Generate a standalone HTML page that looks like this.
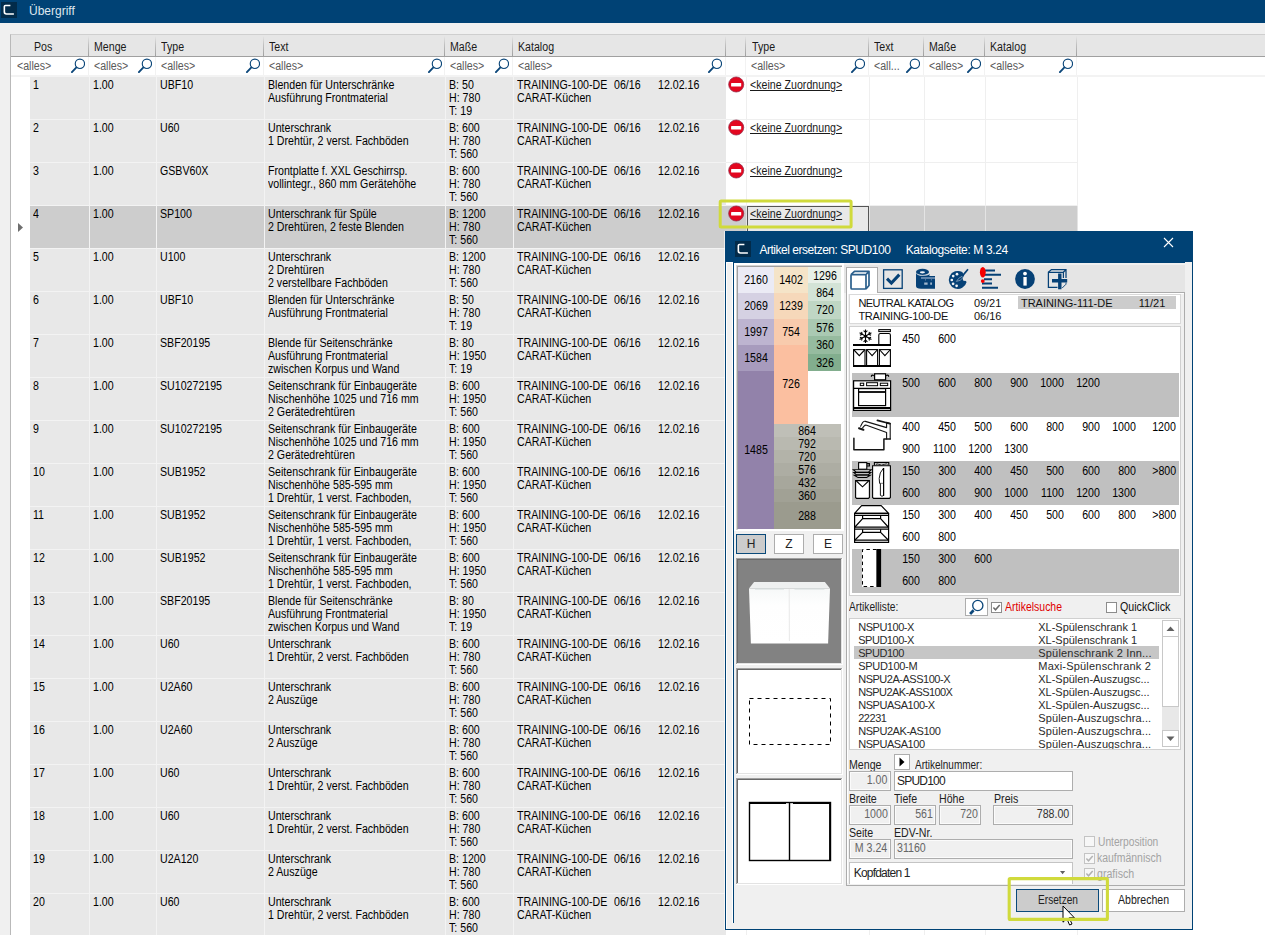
<!DOCTYPE html><html><head><meta charset="utf-8"><title>Übergriff</title><style>
*{box-sizing:border-box;margin:0;padding:0}
html,body{width:1265px;height:935px;overflow:hidden}
body{background:#f0f0f0;font-family:"Liberation Sans",sans-serif;font-size:12.5px;color:#000;position:relative;letter-spacing:0}
.a{position:absolute}
.t{position:absolute;white-space:pre;line-height:13px;transform:scaleX(.85);transform-origin:0 0}
.hd{position:absolute;top:35px;height:21px;background:#e6e6e6}
.hs{position:absolute;top:36px;width:1px;height:21px;background:linear-gradient(to bottom,rgba(160,160,160,0) 0%,rgba(160,160,160,.55) 45%,#a0a0a0 100%)}
.ht{position:absolute;top:41px;white-space:pre;line-height:13px;color:#1a1a1a;transform:scaleX(.85);transform-origin:0 0}
.ft{position:absolute;top:60px;white-space:pre;line-height:13px;color:#5a5a5a;transform:scaleX(.85);transform-origin:0 0}
.row{position:absolute;left:30px;width:696px;height:42px;background:#e8e8e8}
.row.sel{background:#cdcdcd}
.vs{position:absolute;width:1px;background:#f3f3f3}
.seg{font-family:"Liberation Sans",sans-serif;font-size:12px;letter-spacing:0}
.num{position:absolute;white-space:pre;line-height:13px;text-align:right}
.lb{position:absolute;white-space:pre;line-height:13px}
.fld{position:absolute;height:19px;border:1px solid #adadad;background:#f0f0f0;box-shadow:inset 0 0 0 1px #f8f8f8}
.fld span{position:absolute;top:3px;line-height:13px;white-space:pre;font-size:12px;letter-spacing:-0.3px;color:#555}
</style></head><body>
<div class="a" style="left:0;top:0;width:1265px;height:23px;background:#004275"></div>
<div class="a" style="left:1px;top:2px;width:16px;height:16px;background:#022b4a"></div>
<svg class="a" style="left:1px;top:2px" width="16" height="16" viewBox="0 0 16 16"><path d="M9.4 3.45 H4.4 Q3.35 3.45 3.35 4.5 V10.1 Q3.35 11.95 5.5 11.95 H12.9" fill="none" stroke="#fff" stroke-width="1.6"/></svg>
<div class="lb seg" style="left:29px;top:4px;color:#dfe7ee;line-height:14px">Übergriff</div>
<div class="a" style="left:10px;top:34px;width:1255px;height:901px;background:#fff;border-left:1px solid #b9b9b9;border-top:1px solid #cfcfcf"></div>
<div class="a" style="left:30px;top:76px;width:696px;height:859px;background:#f3f3f3"></div>
<div class="hd" style="left:11px;width:1254px"></div>
<div class="a" style="left:11px;top:56px;width:1254px;height:1px;background:#a0a0a0"></div>
<div class="hs" style="left:88px;top:36px;height:20px"></div>
<div class="hs" style="left:155px;top:36px;height:20px"></div>
<div class="hs" style="left:263px;top:36px;height:20px"></div>
<div class="hs" style="left:444px;top:36px;height:20px"></div>
<div class="hs" style="left:512px;top:36px;height:20px"></div>
<div class="hs" style="left:725px;top:36px;height:20px"></div>
<div class="hs" style="left:745px;top:36px;height:20px"></div>
<div class="hs" style="left:868px;top:36px;height:20px"></div>
<div class="hs" style="left:923px;top:36px;height:20px"></div>
<div class="hs" style="left:984px;top:36px;height:20px"></div>
<div class="hs" style="left:1076px;top:36px;height:20px"></div>
<div class="ht" style="left:34px">Pos</div>
<div class="ht" style="left:94px">Menge</div>
<div class="ht" style="left:161px">Type</div>
<div class="ht" style="left:269px">Text</div>
<div class="ht" style="left:450px">Maße</div>
<div class="ht" style="left:518px">Katalog</div>
<div class="ht" style="left:752px">Type</div>
<div class="ht" style="left:874px">Text</div>
<div class="ht" style="left:929px">Maße</div>
<div class="ht" style="left:990px">Katalog</div>
<div class="a" style="left:11px;top:75px;width:1254px;height:2px;background:#f3f3f3"></div>
<div class="a" style="left:88px;top:57px;width:1px;height:18px;background:#f2f2f2"></div>
<div class="a" style="left:155px;top:57px;width:1px;height:18px;background:#f2f2f2"></div>
<div class="a" style="left:263px;top:57px;width:1px;height:18px;background:#f2f2f2"></div>
<div class="a" style="left:444px;top:57px;width:1px;height:18px;background:#f2f2f2"></div>
<div class="a" style="left:512px;top:57px;width:1px;height:18px;background:#f2f2f2"></div>
<div class="a" style="left:725px;top:57px;width:1px;height:18px;background:#f2f2f2"></div>
<div class="a" style="left:745px;top:57px;width:1px;height:18px;background:#f2f2f2"></div>
<div class="a" style="left:868px;top:57px;width:1px;height:18px;background:#f2f2f2"></div>
<div class="a" style="left:923px;top:57px;width:1px;height:18px;background:#f2f2f2"></div>
<div class="a" style="left:984px;top:57px;width:1px;height:18px;background:#f2f2f2"></div>
<div class="a" style="left:1076px;top:57px;width:1px;height:18px;background:#f2f2f2"></div>
<div class="ft" style="left:17px">&lt;alles&gt;</div>
<svg class="a" style="left:70px;top:58px" width="15" height="15" viewBox="0 0 15 15"><circle cx="9.9" cy="5.8" r="4.65" fill="none" stroke="#0c477a" stroke-width="1.15"/><path d="M6.4 9.4 L1.9 14.1" stroke="#0c477a" stroke-width="1.85" stroke-linecap="round"/></svg>
<div class="ft" style="left:94px">&lt;alles&gt;</div>
<svg class="a" style="left:137px;top:58px" width="15" height="15" viewBox="0 0 15 15"><circle cx="9.9" cy="5.8" r="4.65" fill="none" stroke="#0c477a" stroke-width="1.15"/><path d="M6.4 9.4 L1.9 14.1" stroke="#0c477a" stroke-width="1.85" stroke-linecap="round"/></svg>
<div class="ft" style="left:161px">&lt;alles&gt;</div>
<svg class="a" style="left:245px;top:58px" width="15" height="15" viewBox="0 0 15 15"><circle cx="9.9" cy="5.8" r="4.65" fill="none" stroke="#0c477a" stroke-width="1.15"/><path d="M6.4 9.4 L1.9 14.1" stroke="#0c477a" stroke-width="1.85" stroke-linecap="round"/></svg>
<div class="ft" style="left:269px">&lt;alles&gt;</div>
<svg class="a" style="left:427px;top:58px" width="15" height="15" viewBox="0 0 15 15"><circle cx="9.9" cy="5.8" r="4.65" fill="none" stroke="#0c477a" stroke-width="1.15"/><path d="M6.4 9.4 L1.9 14.1" stroke="#0c477a" stroke-width="1.85" stroke-linecap="round"/></svg>
<div class="ft" style="left:450px">&lt;alles&gt;</div>
<svg class="a" style="left:494px;top:58px" width="15" height="15" viewBox="0 0 15 15"><circle cx="9.9" cy="5.8" r="4.65" fill="none" stroke="#0c477a" stroke-width="1.15"/><path d="M6.4 9.4 L1.9 14.1" stroke="#0c477a" stroke-width="1.85" stroke-linecap="round"/></svg>
<div class="ft" style="left:518px">&lt;alles&gt;</div>
<svg class="a" style="left:707px;top:58px" width="15" height="15" viewBox="0 0 15 15"><circle cx="9.9" cy="5.8" r="4.65" fill="none" stroke="#0c477a" stroke-width="1.15"/><path d="M6.4 9.4 L1.9 14.1" stroke="#0c477a" stroke-width="1.85" stroke-linecap="round"/></svg>
<div class="ft" style="left:751px">&lt;alles&gt;</div>
<svg class="a" style="left:850px;top:58px" width="15" height="15" viewBox="0 0 15 15"><circle cx="9.9" cy="5.8" r="4.65" fill="none" stroke="#0c477a" stroke-width="1.15"/><path d="M6.4 9.4 L1.9 14.1" stroke="#0c477a" stroke-width="1.85" stroke-linecap="round"/></svg>
<div class="ft" style="left:874px">&lt;all...</div>
<svg class="a" style="left:905px;top:58px" width="15" height="15" viewBox="0 0 15 15"><circle cx="9.9" cy="5.8" r="4.65" fill="none" stroke="#0c477a" stroke-width="1.15"/><path d="M6.4 9.4 L1.9 14.1" stroke="#0c477a" stroke-width="1.85" stroke-linecap="round"/></svg>
<div class="ft" style="left:929px">&lt;alles&gt;</div>
<svg class="a" style="left:966px;top:58px" width="15" height="15" viewBox="0 0 15 15"><circle cx="9.9" cy="5.8" r="4.65" fill="none" stroke="#0c477a" stroke-width="1.15"/><path d="M6.4 9.4 L1.9 14.1" stroke="#0c477a" stroke-width="1.85" stroke-linecap="round"/></svg>
<div class="ft" style="left:990px">&lt;alles&gt;</div>
<svg class="a" style="left:1058px;top:58px" width="15" height="15" viewBox="0 0 15 15"><circle cx="9.9" cy="5.8" r="4.65" fill="none" stroke="#0c477a" stroke-width="1.15"/><path d="M6.4 9.4 L1.9 14.1" stroke="#0c477a" stroke-width="1.85" stroke-linecap="round"/></svg>
<div class="row" style="top:77px"></div>
<div class="vs" style="left:89px;top:77px;height:42px"></div>
<div class="vs" style="left:156px;top:77px;height:42px"></div>
<div class="vs" style="left:264px;top:77px;height:42px"></div>
<div class="vs" style="left:445px;top:77px;height:42px"></div>
<div class="vs" style="left:513px;top:77px;height:42px"></div>
<div class="vs" style="left:746px;top:77px;height:43px;background:#efefef"></div>
<div class="vs" style="left:869px;top:77px;height:43px;background:#efefef"></div>
<div class="vs" style="left:924px;top:77px;height:43px;background:#efefef"></div>
<div class="vs" style="left:985px;top:77px;height:43px;background:#efefef"></div>
<div class="vs" style="left:1077px;top:77px;height:43px;background:#efefef"></div>
<div class="a" style="left:726px;top:119px;width:352px;height:1px;background:#efefef"></div>
<div class="t" style="left:33px;top:79px">1</div>
<div class="t" style="left:93px;top:79px">1.00</div>
<div class="t" style="left:160px;top:79px">UBF10</div>
<div class="t" style="left:268px;top:79px">Blenden für Unterschränke<br>Ausführung Frontmaterial</div>
<div class="t" style="left:449px;top:79px">B: 50<br>H: 780<br>T: 19</div>
<div class="t" style="left:517px;top:79px">TRAINING-100-DE<br>CARAT-Küchen</div>
<div class="t" style="left:614px;top:79px">06/16</div>
<div class="t" style="left:658px;top:79px">12.02.16</div>
<svg class="a" style="left:728px;top:76px" width="17" height="17" viewBox="0 0 17 17"><circle cx="8.2" cy="8.5" r="7.55" fill="#e3061f" stroke="#8c2846" stroke-width="0.7"/><rect x="3.1" y="6.9" width="10.1" height="3.5" rx="0.5" fill="#fff"/></svg>
<div class="t" style="left:750px;top:79px;text-decoration:underline;color:#1a1a1a">&lt;keine Zuordnung&gt;</div>
<div class="row" style="top:120px"></div>
<div class="vs" style="left:89px;top:120px;height:42px"></div>
<div class="vs" style="left:156px;top:120px;height:42px"></div>
<div class="vs" style="left:264px;top:120px;height:42px"></div>
<div class="vs" style="left:445px;top:120px;height:42px"></div>
<div class="vs" style="left:513px;top:120px;height:42px"></div>
<div class="vs" style="left:746px;top:120px;height:43px;background:#efefef"></div>
<div class="vs" style="left:869px;top:120px;height:43px;background:#efefef"></div>
<div class="vs" style="left:924px;top:120px;height:43px;background:#efefef"></div>
<div class="vs" style="left:985px;top:120px;height:43px;background:#efefef"></div>
<div class="vs" style="left:1077px;top:120px;height:43px;background:#efefef"></div>
<div class="a" style="left:726px;top:162px;width:352px;height:1px;background:#efefef"></div>
<div class="t" style="left:33px;top:122px">2</div>
<div class="t" style="left:93px;top:122px">1.00</div>
<div class="t" style="left:160px;top:122px">U60</div>
<div class="t" style="left:268px;top:122px">Unterschrank<br>1 Drehtür, 2 verst. Fachböden</div>
<div class="t" style="left:449px;top:122px">B: 600<br>H: 780<br>T: 560</div>
<div class="t" style="left:517px;top:122px">TRAINING-100-DE<br>CARAT-Küchen</div>
<div class="t" style="left:614px;top:122px">06/16</div>
<div class="t" style="left:658px;top:122px">12.02.16</div>
<svg class="a" style="left:728px;top:119px" width="17" height="17" viewBox="0 0 17 17"><circle cx="8.2" cy="8.5" r="7.55" fill="#e3061f" stroke="#8c2846" stroke-width="0.7"/><rect x="3.1" y="6.9" width="10.1" height="3.5" rx="0.5" fill="#fff"/></svg>
<div class="t" style="left:750px;top:122px;text-decoration:underline;color:#1a1a1a">&lt;keine Zuordnung&gt;</div>
<div class="row" style="top:163px"></div>
<div class="vs" style="left:89px;top:163px;height:42px"></div>
<div class="vs" style="left:156px;top:163px;height:42px"></div>
<div class="vs" style="left:264px;top:163px;height:42px"></div>
<div class="vs" style="left:445px;top:163px;height:42px"></div>
<div class="vs" style="left:513px;top:163px;height:42px"></div>
<div class="vs" style="left:746px;top:163px;height:43px;background:#efefef"></div>
<div class="vs" style="left:869px;top:163px;height:43px;background:#efefef"></div>
<div class="vs" style="left:924px;top:163px;height:43px;background:#efefef"></div>
<div class="vs" style="left:985px;top:163px;height:43px;background:#efefef"></div>
<div class="vs" style="left:1077px;top:163px;height:43px;background:#efefef"></div>
<div class="a" style="left:726px;top:205px;width:352px;height:1px;background:#efefef"></div>
<div class="t" style="left:33px;top:165px">3</div>
<div class="t" style="left:93px;top:165px">1.00</div>
<div class="t" style="left:160px;top:165px">GSBV60X</div>
<div class="t" style="left:268px;top:165px">Frontplatte f. XXL Geschirrsp.<br>vollintegr., 860 mm Gerätehöhe</div>
<div class="t" style="left:449px;top:165px">B: 600<br>H: 780<br>T: 560</div>
<div class="t" style="left:517px;top:165px">TRAINING-100-DE<br>CARAT-Küchen</div>
<div class="t" style="left:614px;top:165px">06/16</div>
<div class="t" style="left:658px;top:165px">12.02.16</div>
<svg class="a" style="left:728px;top:162px" width="17" height="17" viewBox="0 0 17 17"><circle cx="8.2" cy="8.5" r="7.55" fill="#e3061f" stroke="#8c2846" stroke-width="0.7"/><rect x="3.1" y="6.9" width="10.1" height="3.5" rx="0.5" fill="#fff"/></svg>
<div class="t" style="left:750px;top:165px;text-decoration:underline;color:#1a1a1a">&lt;keine Zuordnung&gt;</div>
<div class="row sel" style="top:206px"></div>
<div class="a" style="left:726px;top:206px;width:352px;height:42px;background:#cdcdcd"></div>
<div class="vs" style="left:89px;top:206px;height:42px"></div>
<div class="vs" style="left:156px;top:206px;height:42px"></div>
<div class="vs" style="left:264px;top:206px;height:42px"></div>
<div class="vs" style="left:445px;top:206px;height:42px"></div>
<div class="vs" style="left:513px;top:206px;height:42px"></div>
<div class="vs" style="left:746px;top:206px;height:43px;background:#e4e4e4"></div>
<div class="vs" style="left:869px;top:206px;height:43px;background:#e4e4e4"></div>
<div class="vs" style="left:924px;top:206px;height:43px;background:#e4e4e4"></div>
<div class="vs" style="left:985px;top:206px;height:43px;background:#e4e4e4"></div>
<div class="vs" style="left:1077px;top:206px;height:43px;background:#e4e4e4"></div>
<div class="a" style="left:726px;top:248px;width:352px;height:1px;background:#efefef"></div>
<div class="t" style="left:33px;top:208px">4</div>
<div class="t" style="left:93px;top:208px">1.00</div>
<div class="t" style="left:160px;top:208px">SP100</div>
<div class="t" style="left:268px;top:208px">Unterschrank für Spüle<br>2 Drehtüren, 2 feste Blenden</div>
<div class="t" style="left:449px;top:208px">B: 1200<br>H: 780<br>T: 560</div>
<div class="t" style="left:517px;top:208px">TRAINING-100-DE<br>CARAT-Küchen</div>
<div class="t" style="left:614px;top:208px">06/16</div>
<div class="t" style="left:658px;top:208px">12.02.16</div>
<div class="a" style="left:747px;top:206px;width:122px;height:42px;background:#e8e8e8;border:1px solid #555"></div>
<svg class="a" style="left:728px;top:205px" width="17" height="17" viewBox="0 0 17 17"><circle cx="8.2" cy="8.5" r="7.55" fill="#e3061f" stroke="#8c2846" stroke-width="0.7"/><rect x="3.1" y="6.9" width="10.1" height="3.5" rx="0.5" fill="#fff"/></svg>
<div class="t" style="left:750px;top:208px;text-decoration:underline;color:#1a1a1a">&lt;keine Zuordnung&gt;</div>
<div class="row" style="top:249px"></div>
<div class="vs" style="left:89px;top:249px;height:42px"></div>
<div class="vs" style="left:156px;top:249px;height:42px"></div>
<div class="vs" style="left:264px;top:249px;height:42px"></div>
<div class="vs" style="left:445px;top:249px;height:42px"></div>
<div class="vs" style="left:513px;top:249px;height:42px"></div>
<div class="vs" style="left:746px;top:249px;height:43px;background:#efefef"></div>
<div class="vs" style="left:869px;top:249px;height:43px;background:#efefef"></div>
<div class="vs" style="left:924px;top:249px;height:43px;background:#efefef"></div>
<div class="vs" style="left:985px;top:249px;height:43px;background:#efefef"></div>
<div class="vs" style="left:1077px;top:249px;height:43px;background:#efefef"></div>
<div class="a" style="left:726px;top:291px;width:352px;height:1px;background:#efefef"></div>
<div class="t" style="left:33px;top:251px">5</div>
<div class="t" style="left:93px;top:251px">1.00</div>
<div class="t" style="left:160px;top:251px">U100</div>
<div class="t" style="left:268px;top:251px">Unterschrank<br>2 Drehtüren<br>2 verstellbare Fachböden</div>
<div class="t" style="left:449px;top:251px">B: 1200<br>H: 780<br>T: 560</div>
<div class="t" style="left:517px;top:251px">TRAINING-100-DE<br>CARAT-Küchen</div>
<div class="t" style="left:614px;top:251px">06/16</div>
<div class="t" style="left:658px;top:251px">12.02.16</div>
<div class="row" style="top:292px"></div>
<div class="vs" style="left:89px;top:292px;height:42px"></div>
<div class="vs" style="left:156px;top:292px;height:42px"></div>
<div class="vs" style="left:264px;top:292px;height:42px"></div>
<div class="vs" style="left:445px;top:292px;height:42px"></div>
<div class="vs" style="left:513px;top:292px;height:42px"></div>
<div class="vs" style="left:746px;top:292px;height:43px;background:#efefef"></div>
<div class="vs" style="left:869px;top:292px;height:43px;background:#efefef"></div>
<div class="vs" style="left:924px;top:292px;height:43px;background:#efefef"></div>
<div class="vs" style="left:985px;top:292px;height:43px;background:#efefef"></div>
<div class="vs" style="left:1077px;top:292px;height:43px;background:#efefef"></div>
<div class="a" style="left:726px;top:334px;width:352px;height:1px;background:#efefef"></div>
<div class="t" style="left:33px;top:294px">6</div>
<div class="t" style="left:93px;top:294px">1.00</div>
<div class="t" style="left:160px;top:294px">UBF10</div>
<div class="t" style="left:268px;top:294px">Blenden für Unterschränke<br>Ausführung Frontmaterial</div>
<div class="t" style="left:449px;top:294px">B: 50<br>H: 780<br>T: 19</div>
<div class="t" style="left:517px;top:294px">TRAINING-100-DE<br>CARAT-Küchen</div>
<div class="t" style="left:614px;top:294px">06/16</div>
<div class="t" style="left:658px;top:294px">12.02.16</div>
<div class="row" style="top:335px"></div>
<div class="vs" style="left:89px;top:335px;height:42px"></div>
<div class="vs" style="left:156px;top:335px;height:42px"></div>
<div class="vs" style="left:264px;top:335px;height:42px"></div>
<div class="vs" style="left:445px;top:335px;height:42px"></div>
<div class="vs" style="left:513px;top:335px;height:42px"></div>
<div class="vs" style="left:746px;top:335px;height:43px;background:#efefef"></div>
<div class="vs" style="left:869px;top:335px;height:43px;background:#efefef"></div>
<div class="vs" style="left:924px;top:335px;height:43px;background:#efefef"></div>
<div class="vs" style="left:985px;top:335px;height:43px;background:#efefef"></div>
<div class="vs" style="left:1077px;top:335px;height:43px;background:#efefef"></div>
<div class="a" style="left:726px;top:377px;width:352px;height:1px;background:#efefef"></div>
<div class="t" style="left:33px;top:337px">7</div>
<div class="t" style="left:93px;top:337px">1.00</div>
<div class="t" style="left:160px;top:337px">SBF20195</div>
<div class="t" style="left:268px;top:337px">Blende für Seitenschränke<br>Ausführung Frontmaterial<br>zwischen Korpus und Wand</div>
<div class="t" style="left:449px;top:337px">B: 80<br>H: 1950<br>T: 19</div>
<div class="t" style="left:517px;top:337px">TRAINING-100-DE<br>CARAT-Küchen</div>
<div class="t" style="left:614px;top:337px">06/16</div>
<div class="t" style="left:658px;top:337px">12.02.16</div>
<div class="row" style="top:378px"></div>
<div class="vs" style="left:89px;top:378px;height:42px"></div>
<div class="vs" style="left:156px;top:378px;height:42px"></div>
<div class="vs" style="left:264px;top:378px;height:42px"></div>
<div class="vs" style="left:445px;top:378px;height:42px"></div>
<div class="vs" style="left:513px;top:378px;height:42px"></div>
<div class="vs" style="left:746px;top:378px;height:43px;background:#efefef"></div>
<div class="vs" style="left:869px;top:378px;height:43px;background:#efefef"></div>
<div class="vs" style="left:924px;top:378px;height:43px;background:#efefef"></div>
<div class="vs" style="left:985px;top:378px;height:43px;background:#efefef"></div>
<div class="vs" style="left:1077px;top:378px;height:43px;background:#efefef"></div>
<div class="a" style="left:726px;top:420px;width:352px;height:1px;background:#efefef"></div>
<div class="t" style="left:33px;top:380px">8</div>
<div class="t" style="left:93px;top:380px">1.00</div>
<div class="t" style="left:160px;top:380px">SU10272195</div>
<div class="t" style="left:268px;top:380px">Seitenschrank für Einbaugeräte<br>Nischenhöhe 1025 und 716 mm<br>2 Gerätedrehtüren</div>
<div class="t" style="left:449px;top:380px">B: 600<br>H: 1950<br>T: 560</div>
<div class="t" style="left:517px;top:380px">TRAINING-100-DE<br>CARAT-Küchen</div>
<div class="t" style="left:614px;top:380px">06/16</div>
<div class="t" style="left:658px;top:380px">12.02.16</div>
<div class="row" style="top:421px"></div>
<div class="vs" style="left:89px;top:421px;height:42px"></div>
<div class="vs" style="left:156px;top:421px;height:42px"></div>
<div class="vs" style="left:264px;top:421px;height:42px"></div>
<div class="vs" style="left:445px;top:421px;height:42px"></div>
<div class="vs" style="left:513px;top:421px;height:42px"></div>
<div class="vs" style="left:746px;top:421px;height:43px;background:#efefef"></div>
<div class="vs" style="left:869px;top:421px;height:43px;background:#efefef"></div>
<div class="vs" style="left:924px;top:421px;height:43px;background:#efefef"></div>
<div class="vs" style="left:985px;top:421px;height:43px;background:#efefef"></div>
<div class="vs" style="left:1077px;top:421px;height:43px;background:#efefef"></div>
<div class="a" style="left:726px;top:463px;width:352px;height:1px;background:#efefef"></div>
<div class="t" style="left:33px;top:423px">9</div>
<div class="t" style="left:93px;top:423px">1.00</div>
<div class="t" style="left:160px;top:423px">SU10272195</div>
<div class="t" style="left:268px;top:423px">Seitenschrank für Einbaugeräte<br>Nischenhöhe 1025 und 716 mm<br>2 Gerätedrehtüren</div>
<div class="t" style="left:449px;top:423px">B: 600<br>H: 1950<br>T: 560</div>
<div class="t" style="left:517px;top:423px">TRAINING-100-DE<br>CARAT-Küchen</div>
<div class="t" style="left:614px;top:423px">06/16</div>
<div class="t" style="left:658px;top:423px">12.02.16</div>
<div class="row" style="top:464px"></div>
<div class="vs" style="left:89px;top:464px;height:42px"></div>
<div class="vs" style="left:156px;top:464px;height:42px"></div>
<div class="vs" style="left:264px;top:464px;height:42px"></div>
<div class="vs" style="left:445px;top:464px;height:42px"></div>
<div class="vs" style="left:513px;top:464px;height:42px"></div>
<div class="vs" style="left:746px;top:464px;height:43px;background:#efefef"></div>
<div class="vs" style="left:869px;top:464px;height:43px;background:#efefef"></div>
<div class="vs" style="left:924px;top:464px;height:43px;background:#efefef"></div>
<div class="vs" style="left:985px;top:464px;height:43px;background:#efefef"></div>
<div class="vs" style="left:1077px;top:464px;height:43px;background:#efefef"></div>
<div class="a" style="left:726px;top:506px;width:352px;height:1px;background:#efefef"></div>
<div class="t" style="left:33px;top:466px">10</div>
<div class="t" style="left:93px;top:466px">1.00</div>
<div class="t" style="left:160px;top:466px">SUB1952</div>
<div class="t" style="left:268px;top:466px">Seitenschrank für Einbaugeräte<br>Nischenhöhe 585-595 mm<br>1 Drehtür, 1 verst. Fachboden,</div>
<div class="t" style="left:449px;top:466px">B: 600<br>H: 1950<br>T: 560</div>
<div class="t" style="left:517px;top:466px">TRAINING-100-DE<br>CARAT-Küchen</div>
<div class="t" style="left:614px;top:466px">06/16</div>
<div class="t" style="left:658px;top:466px">12.02.16</div>
<div class="row" style="top:507px"></div>
<div class="vs" style="left:89px;top:507px;height:42px"></div>
<div class="vs" style="left:156px;top:507px;height:42px"></div>
<div class="vs" style="left:264px;top:507px;height:42px"></div>
<div class="vs" style="left:445px;top:507px;height:42px"></div>
<div class="vs" style="left:513px;top:507px;height:42px"></div>
<div class="vs" style="left:746px;top:507px;height:43px;background:#efefef"></div>
<div class="vs" style="left:869px;top:507px;height:43px;background:#efefef"></div>
<div class="vs" style="left:924px;top:507px;height:43px;background:#efefef"></div>
<div class="vs" style="left:985px;top:507px;height:43px;background:#efefef"></div>
<div class="vs" style="left:1077px;top:507px;height:43px;background:#efefef"></div>
<div class="a" style="left:726px;top:549px;width:352px;height:1px;background:#efefef"></div>
<div class="t" style="left:33px;top:509px">11</div>
<div class="t" style="left:93px;top:509px">1.00</div>
<div class="t" style="left:160px;top:509px">SUB1952</div>
<div class="t" style="left:268px;top:509px">Seitenschrank für Einbaugeräte<br>Nischenhöhe 585-595 mm<br>1 Drehtür, 1 verst. Fachboden,</div>
<div class="t" style="left:449px;top:509px">B: 600<br>H: 1950<br>T: 560</div>
<div class="t" style="left:517px;top:509px">TRAINING-100-DE<br>CARAT-Küchen</div>
<div class="t" style="left:614px;top:509px">06/16</div>
<div class="t" style="left:658px;top:509px">12.02.16</div>
<div class="row" style="top:550px"></div>
<div class="vs" style="left:89px;top:550px;height:42px"></div>
<div class="vs" style="left:156px;top:550px;height:42px"></div>
<div class="vs" style="left:264px;top:550px;height:42px"></div>
<div class="vs" style="left:445px;top:550px;height:42px"></div>
<div class="vs" style="left:513px;top:550px;height:42px"></div>
<div class="vs" style="left:746px;top:550px;height:43px;background:#efefef"></div>
<div class="vs" style="left:869px;top:550px;height:43px;background:#efefef"></div>
<div class="vs" style="left:924px;top:550px;height:43px;background:#efefef"></div>
<div class="vs" style="left:985px;top:550px;height:43px;background:#efefef"></div>
<div class="vs" style="left:1077px;top:550px;height:43px;background:#efefef"></div>
<div class="a" style="left:726px;top:592px;width:352px;height:1px;background:#efefef"></div>
<div class="t" style="left:33px;top:552px">12</div>
<div class="t" style="left:93px;top:552px">1.00</div>
<div class="t" style="left:160px;top:552px">SUB1952</div>
<div class="t" style="left:268px;top:552px">Seitenschrank für Einbaugeräte<br>Nischenhöhe 585-595 mm<br>1 Drehtür, 1 verst. Fachboden,</div>
<div class="t" style="left:449px;top:552px">B: 600<br>H: 1950<br>T: 560</div>
<div class="t" style="left:517px;top:552px">TRAINING-100-DE<br>CARAT-Küchen</div>
<div class="t" style="left:614px;top:552px">06/16</div>
<div class="t" style="left:658px;top:552px">12.02.16</div>
<div class="row" style="top:593px"></div>
<div class="vs" style="left:89px;top:593px;height:42px"></div>
<div class="vs" style="left:156px;top:593px;height:42px"></div>
<div class="vs" style="left:264px;top:593px;height:42px"></div>
<div class="vs" style="left:445px;top:593px;height:42px"></div>
<div class="vs" style="left:513px;top:593px;height:42px"></div>
<div class="vs" style="left:746px;top:593px;height:43px;background:#efefef"></div>
<div class="vs" style="left:869px;top:593px;height:43px;background:#efefef"></div>
<div class="vs" style="left:924px;top:593px;height:43px;background:#efefef"></div>
<div class="vs" style="left:985px;top:593px;height:43px;background:#efefef"></div>
<div class="vs" style="left:1077px;top:593px;height:43px;background:#efefef"></div>
<div class="a" style="left:726px;top:635px;width:352px;height:1px;background:#efefef"></div>
<div class="t" style="left:33px;top:595px">13</div>
<div class="t" style="left:93px;top:595px">1.00</div>
<div class="t" style="left:160px;top:595px">SBF20195</div>
<div class="t" style="left:268px;top:595px">Blende für Seitenschränke<br>Ausführung Frontmaterial<br>zwischen Korpus und Wand</div>
<div class="t" style="left:449px;top:595px">B: 80<br>H: 1950<br>T: 19</div>
<div class="t" style="left:517px;top:595px">TRAINING-100-DE<br>CARAT-Küchen</div>
<div class="t" style="left:614px;top:595px">06/16</div>
<div class="t" style="left:658px;top:595px">12.02.16</div>
<div class="row" style="top:636px"></div>
<div class="vs" style="left:89px;top:636px;height:42px"></div>
<div class="vs" style="left:156px;top:636px;height:42px"></div>
<div class="vs" style="left:264px;top:636px;height:42px"></div>
<div class="vs" style="left:445px;top:636px;height:42px"></div>
<div class="vs" style="left:513px;top:636px;height:42px"></div>
<div class="vs" style="left:746px;top:636px;height:43px;background:#efefef"></div>
<div class="vs" style="left:869px;top:636px;height:43px;background:#efefef"></div>
<div class="vs" style="left:924px;top:636px;height:43px;background:#efefef"></div>
<div class="vs" style="left:985px;top:636px;height:43px;background:#efefef"></div>
<div class="vs" style="left:1077px;top:636px;height:43px;background:#efefef"></div>
<div class="a" style="left:726px;top:678px;width:352px;height:1px;background:#efefef"></div>
<div class="t" style="left:33px;top:638px">14</div>
<div class="t" style="left:93px;top:638px">1.00</div>
<div class="t" style="left:160px;top:638px">U60</div>
<div class="t" style="left:268px;top:638px">Unterschrank<br>1 Drehtür, 2 verst. Fachböden</div>
<div class="t" style="left:449px;top:638px">B: 600<br>H: 780<br>T: 560</div>
<div class="t" style="left:517px;top:638px">TRAINING-100-DE<br>CARAT-Küchen</div>
<div class="t" style="left:614px;top:638px">06/16</div>
<div class="t" style="left:658px;top:638px">12.02.16</div>
<div class="row" style="top:679px"></div>
<div class="vs" style="left:89px;top:679px;height:42px"></div>
<div class="vs" style="left:156px;top:679px;height:42px"></div>
<div class="vs" style="left:264px;top:679px;height:42px"></div>
<div class="vs" style="left:445px;top:679px;height:42px"></div>
<div class="vs" style="left:513px;top:679px;height:42px"></div>
<div class="vs" style="left:746px;top:679px;height:43px;background:#efefef"></div>
<div class="vs" style="left:869px;top:679px;height:43px;background:#efefef"></div>
<div class="vs" style="left:924px;top:679px;height:43px;background:#efefef"></div>
<div class="vs" style="left:985px;top:679px;height:43px;background:#efefef"></div>
<div class="vs" style="left:1077px;top:679px;height:43px;background:#efefef"></div>
<div class="a" style="left:726px;top:721px;width:352px;height:1px;background:#efefef"></div>
<div class="t" style="left:33px;top:681px">15</div>
<div class="t" style="left:93px;top:681px">1.00</div>
<div class="t" style="left:160px;top:681px">U2A60</div>
<div class="t" style="left:268px;top:681px">Unterschrank<br>2 Auszüge</div>
<div class="t" style="left:449px;top:681px">B: 600<br>H: 780<br>T: 560</div>
<div class="t" style="left:517px;top:681px">TRAINING-100-DE<br>CARAT-Küchen</div>
<div class="t" style="left:614px;top:681px">06/16</div>
<div class="t" style="left:658px;top:681px">12.02.16</div>
<div class="row" style="top:722px"></div>
<div class="vs" style="left:89px;top:722px;height:42px"></div>
<div class="vs" style="left:156px;top:722px;height:42px"></div>
<div class="vs" style="left:264px;top:722px;height:42px"></div>
<div class="vs" style="left:445px;top:722px;height:42px"></div>
<div class="vs" style="left:513px;top:722px;height:42px"></div>
<div class="vs" style="left:746px;top:722px;height:43px;background:#efefef"></div>
<div class="vs" style="left:869px;top:722px;height:43px;background:#efefef"></div>
<div class="vs" style="left:924px;top:722px;height:43px;background:#efefef"></div>
<div class="vs" style="left:985px;top:722px;height:43px;background:#efefef"></div>
<div class="vs" style="left:1077px;top:722px;height:43px;background:#efefef"></div>
<div class="a" style="left:726px;top:764px;width:352px;height:1px;background:#efefef"></div>
<div class="t" style="left:33px;top:724px">16</div>
<div class="t" style="left:93px;top:724px">1.00</div>
<div class="t" style="left:160px;top:724px">U2A60</div>
<div class="t" style="left:268px;top:724px">Unterschrank<br>2 Auszüge</div>
<div class="t" style="left:449px;top:724px">B: 600<br>H: 780<br>T: 560</div>
<div class="t" style="left:517px;top:724px">TRAINING-100-DE<br>CARAT-Küchen</div>
<div class="t" style="left:614px;top:724px">06/16</div>
<div class="t" style="left:658px;top:724px">12.02.16</div>
<div class="row" style="top:765px"></div>
<div class="vs" style="left:89px;top:765px;height:42px"></div>
<div class="vs" style="left:156px;top:765px;height:42px"></div>
<div class="vs" style="left:264px;top:765px;height:42px"></div>
<div class="vs" style="left:445px;top:765px;height:42px"></div>
<div class="vs" style="left:513px;top:765px;height:42px"></div>
<div class="vs" style="left:746px;top:765px;height:43px;background:#efefef"></div>
<div class="vs" style="left:869px;top:765px;height:43px;background:#efefef"></div>
<div class="vs" style="left:924px;top:765px;height:43px;background:#efefef"></div>
<div class="vs" style="left:985px;top:765px;height:43px;background:#efefef"></div>
<div class="vs" style="left:1077px;top:765px;height:43px;background:#efefef"></div>
<div class="a" style="left:726px;top:807px;width:352px;height:1px;background:#efefef"></div>
<div class="t" style="left:33px;top:767px">17</div>
<div class="t" style="left:93px;top:767px">1.00</div>
<div class="t" style="left:160px;top:767px">U60</div>
<div class="t" style="left:268px;top:767px">Unterschrank<br>1 Drehtür, 2 verst. Fachböden</div>
<div class="t" style="left:449px;top:767px">B: 600<br>H: 780<br>T: 560</div>
<div class="t" style="left:517px;top:767px">TRAINING-100-DE<br>CARAT-Küchen</div>
<div class="t" style="left:614px;top:767px">06/16</div>
<div class="t" style="left:658px;top:767px">12.02.16</div>
<div class="row" style="top:808px"></div>
<div class="vs" style="left:89px;top:808px;height:42px"></div>
<div class="vs" style="left:156px;top:808px;height:42px"></div>
<div class="vs" style="left:264px;top:808px;height:42px"></div>
<div class="vs" style="left:445px;top:808px;height:42px"></div>
<div class="vs" style="left:513px;top:808px;height:42px"></div>
<div class="vs" style="left:746px;top:808px;height:43px;background:#efefef"></div>
<div class="vs" style="left:869px;top:808px;height:43px;background:#efefef"></div>
<div class="vs" style="left:924px;top:808px;height:43px;background:#efefef"></div>
<div class="vs" style="left:985px;top:808px;height:43px;background:#efefef"></div>
<div class="vs" style="left:1077px;top:808px;height:43px;background:#efefef"></div>
<div class="a" style="left:726px;top:850px;width:352px;height:1px;background:#efefef"></div>
<div class="t" style="left:33px;top:810px">18</div>
<div class="t" style="left:93px;top:810px">1.00</div>
<div class="t" style="left:160px;top:810px">U60</div>
<div class="t" style="left:268px;top:810px">Unterschrank<br>1 Drehtür, 2 verst. Fachböden</div>
<div class="t" style="left:449px;top:810px">B: 600<br>H: 780<br>T: 560</div>
<div class="t" style="left:517px;top:810px">TRAINING-100-DE<br>CARAT-Küchen</div>
<div class="t" style="left:614px;top:810px">06/16</div>
<div class="t" style="left:658px;top:810px">12.02.16</div>
<div class="row" style="top:851px"></div>
<div class="vs" style="left:89px;top:851px;height:42px"></div>
<div class="vs" style="left:156px;top:851px;height:42px"></div>
<div class="vs" style="left:264px;top:851px;height:42px"></div>
<div class="vs" style="left:445px;top:851px;height:42px"></div>
<div class="vs" style="left:513px;top:851px;height:42px"></div>
<div class="vs" style="left:746px;top:851px;height:43px;background:#efefef"></div>
<div class="vs" style="left:869px;top:851px;height:43px;background:#efefef"></div>
<div class="vs" style="left:924px;top:851px;height:43px;background:#efefef"></div>
<div class="vs" style="left:985px;top:851px;height:43px;background:#efefef"></div>
<div class="vs" style="left:1077px;top:851px;height:43px;background:#efefef"></div>
<div class="a" style="left:726px;top:893px;width:352px;height:1px;background:#efefef"></div>
<div class="t" style="left:33px;top:853px">19</div>
<div class="t" style="left:93px;top:853px">1.00</div>
<div class="t" style="left:160px;top:853px">U2A120</div>
<div class="t" style="left:268px;top:853px">Unterschrank<br>2 Auszüge</div>
<div class="t" style="left:449px;top:853px">B: 1200<br>H: 780<br>T: 560</div>
<div class="t" style="left:517px;top:853px">TRAINING-100-DE<br>CARAT-Küchen</div>
<div class="t" style="left:614px;top:853px">06/16</div>
<div class="t" style="left:658px;top:853px">12.02.16</div>
<div class="row" style="top:894px"></div>
<div class="vs" style="left:89px;top:894px;height:42px"></div>
<div class="vs" style="left:156px;top:894px;height:42px"></div>
<div class="vs" style="left:264px;top:894px;height:42px"></div>
<div class="vs" style="left:445px;top:894px;height:42px"></div>
<div class="vs" style="left:513px;top:894px;height:42px"></div>
<div class="vs" style="left:746px;top:894px;height:43px;background:#efefef"></div>
<div class="vs" style="left:869px;top:894px;height:43px;background:#efefef"></div>
<div class="vs" style="left:924px;top:894px;height:43px;background:#efefef"></div>
<div class="vs" style="left:985px;top:894px;height:43px;background:#efefef"></div>
<div class="vs" style="left:1077px;top:894px;height:43px;background:#efefef"></div>
<div class="a" style="left:726px;top:936px;width:352px;height:1px;background:#efefef"></div>
<div class="t" style="left:33px;top:896px">20</div>
<div class="t" style="left:93px;top:896px">1.00</div>
<div class="t" style="left:160px;top:896px">U60</div>
<div class="t" style="left:268px;top:896px">Unterschrank<br>1 Drehtür, 2 verst. Fachböden</div>
<div class="t" style="left:449px;top:896px">B: 600<br>H: 780<br>T: 560</div>
<div class="t" style="left:517px;top:896px">TRAINING-100-DE<br>CARAT-Küchen</div>
<div class="t" style="left:614px;top:896px">06/16</div>
<div class="t" style="left:658px;top:896px">12.02.16</div>
<svg class="a" style="left:17px;top:222px" width="7" height="11" viewBox="0 0 7 11"><path d="M1 1 L6 5.5 L1 10 Z" fill="#6e6e6e"/></svg>
<svg class="a" style="left:716px;top:197px" width="140" height="35"><rect x="4.2" y="3.9" width="130.9" height="26.1" rx="1" fill="none" stroke="#d0da3c" stroke-width="3"/></svg>
<div class="a" style="left:724px;top:231px;width:1px;height:699px;background:rgba(255,255,255,.6);"></div>
<div class="a" style="left:725px;top:231px;width:468px;height:699px;background:#f0f0f0;border:1px solid #004275;border-top:none"></div>
<div class="a" style="left:725px;top:231px;width:468px;height:31px;background:#004275;"></div>
<div class="a" style="left:726px;top:262px;width:1px;height:667px;background:#fff;"></div>
<div class="a" style="left:732px;top:262px;width:1px;height:661px;background:#fff;"></div>
<div class="a" style="left:726px;top:262px;width:7px;height:1px;background:#fff;"></div>
<div class="a" style="left:733px;top:262px;width:1px;height:661px;background:#004275;"></div>
<div class="a" style="left:733px;top:262px;width:452px;height:1px;background:#004275;"></div>
<div class="a" style="left:735px;top:241px;width:16px;height:16px;background:#022b4a;"></div>
<svg class="a" style="left:735px;top:241px" width="16" height="16" viewBox="0 0 16 16"><path d="M9.4 3.45 H4.4 Q3.35 3.45 3.35 4.5 V10.1 Q3.35 11.95 5.5 11.95 H12.9" fill="none" stroke="#fff" stroke-width="1.6"/></svg>
<div class="lb" style="left:759.4px;top:243px;font-size:12px;letter-spacing:-0.47px;color:#fff;line-height:14px">Artikel ersetzen: SPUD100</div>
<div class="lb" style="left:905.7px;top:243px;font-size:12px;letter-spacing:-0.36px;color:#fff;line-height:14px">Katalogseite: M 3.24</div>
<svg class="a" style="left:1163px;top:237px" width="11" height="11" viewBox="0 0 11 11"><path d="M1 1 L10 10 M10 1 L1 10" stroke="#fff" stroke-width="1.1"/></svg>
<div class="a" style="left:734px;top:263px;width:451px;height:3px;background:#f0f0f0;"></div>
<div class="a" style="left:843px;top:265px;width:342px;height:28px;background:#e5e5e5;"></div>
<div class="a" style="left:734px;top:263px;width:110px;height:268px;background:#fff;"></div>
<div class="a" style="left:736px;top:265px;width:106px;height:265px;background:#d4d4d4;"></div>
<div class="a" style="left:737px;top:266px;width:105px;height:263px;background:#a0a0a0;"></div>
<div class="a" style="left:738px;top:267px;width:104px;height:263px;background:#fff;"></div>
<div class="a" style="left:738px;top:267px;width:103px;height:262px;background:#fff;"></div>
<div class="a" style="left:738px;top:267px;width:36px;height:26px;background:#ebebf5;"></div>
<div class="a" style="left:738px;top:293px;width:36px;height:26px;background:#d5d1e3;"></div>
<div class="a" style="left:738px;top:319px;width:36px;height:26px;background:#bdb4d0;"></div>
<div class="a" style="left:738px;top:345px;width:36px;height:26px;background:#a79bbd;"></div>
<div class="a" style="left:738px;top:371px;width:36px;height:158px;background:#9282aa;"></div>
<div class="a" style="left:774px;top:267px;width:34px;height:26px;background:#f5e4c8;"></div>
<div class="a" style="left:774px;top:293px;width:34px;height:26px;background:#f6d8ba;"></div>
<div class="a" style="left:774px;top:319px;width:34px;height:26px;background:#f8cbad;"></div>
<div class="a" style="left:774px;top:345px;width:34px;height:79px;background:#fbbfa0;"></div>
<div class="a" style="left:808px;top:267px;width:33px;height:16px;background:#e8f0e8;"></div>
<div class="a" style="left:808px;top:283px;width:33px;height:18px;background:#d3e3d6;"></div>
<div class="a" style="left:808px;top:301px;width:33px;height:18px;background:#bfd6c4;"></div>
<div class="a" style="left:808px;top:319px;width:33px;height:17px;background:#aac9b2;"></div>
<div class="a" style="left:808px;top:336px;width:33px;height:18px;background:#96bb9f;"></div>
<div class="a" style="left:808px;top:354px;width:33px;height:17px;background:#82ae8e;"></div>
<div class="a" style="left:774px;top:424px;width:67px;height:13px;background:#bfbfb7;"></div>
<div class="a" style="left:774px;top:437px;width:67px;height:13px;background:#b9b9b0;"></div>
<div class="a" style="left:774px;top:450px;width:67px;height:13px;background:#b3b3a9;"></div>
<div class="a" style="left:774px;top:463px;width:67px;height:13px;background:#adada3;"></div>
<div class="a" style="left:774px;top:476px;width:67px;height:13px;background:#a7a79c;"></div>
<div class="a" style="left:774px;top:489px;width:67px;height:13px;background:#a1a195;"></div>
<div class="a" style="left:774px;top:502px;width:67px;height:27px;background:#9b9b8e;"></div>
<div class="lb" style="left:726px;top:274px;width:60px;text-align:center;transform:scaleX(.85);transform-origin:50% 0">2160</div>
<div class="lb" style="left:726px;top:300px;width:60px;text-align:center;transform:scaleX(.85);transform-origin:50% 0">2069</div>
<div class="lb" style="left:726px;top:326px;width:60px;text-align:center;transform:scaleX(.85);transform-origin:50% 0">1997</div>
<div class="lb" style="left:726px;top:352px;width:60px;text-align:center;transform:scaleX(.85);transform-origin:50% 0">1584</div>
<div class="lb" style="left:726px;top:444px;width:60px;text-align:center;transform:scaleX(.85);transform-origin:50% 0">1485</div>
<div class="lb" style="left:761px;top:274px;width:60px;text-align:center;transform:scaleX(.85);transform-origin:50% 0">1402</div>
<div class="lb" style="left:761px;top:300px;width:60px;text-align:center;transform:scaleX(.85);transform-origin:50% 0">1239</div>
<div class="lb" style="left:761px;top:326px;width:60px;text-align:center;transform:scaleX(.85);transform-origin:50% 0">754</div>
<div class="lb" style="left:761px;top:378px;width:60px;text-align:center;transform:scaleX(.85);transform-origin:50% 0">726</div>
<div class="lb" style="left:794.5px;top:269.5px;width:60px;text-align:center;transform:scaleX(.85);transform-origin:50% 0">1296</div>
<div class="lb" style="left:794.5px;top:286.5px;width:60px;text-align:center;transform:scaleX(.85);transform-origin:50% 0">864</div>
<div class="lb" style="left:794.5px;top:304px;width:60px;text-align:center;transform:scaleX(.85);transform-origin:50% 0">720</div>
<div class="lb" style="left:794.5px;top:322px;width:60px;text-align:center;transform:scaleX(.85);transform-origin:50% 0">576</div>
<div class="lb" style="left:794.5px;top:339px;width:60px;text-align:center;transform:scaleX(.85);transform-origin:50% 0">360</div>
<div class="lb" style="left:794.5px;top:356.5px;width:60px;text-align:center;transform:scaleX(.85);transform-origin:50% 0">326</div>
<div class="lb" style="left:777px;top:425px;width:60px;text-align:center;transform:scaleX(.85);transform-origin:50% 0">864</div>
<div class="lb" style="left:777px;top:438px;width:60px;text-align:center;transform:scaleX(.85);transform-origin:50% 0">792</div>
<div class="lb" style="left:777px;top:451px;width:60px;text-align:center;transform:scaleX(.85);transform-origin:50% 0">720</div>
<div class="lb" style="left:777px;top:464px;width:60px;text-align:center;transform:scaleX(.85);transform-origin:50% 0">576</div>
<div class="lb" style="left:777px;top:477px;width:60px;text-align:center;transform:scaleX(.85);transform-origin:50% 0">432</div>
<div class="lb" style="left:777px;top:490px;width:60px;text-align:center;transform:scaleX(.85);transform-origin:50% 0">360</div>
<div class="lb" style="left:777px;top:510px;width:60px;text-align:center;transform:scaleX(.85);transform-origin:50% 0">288</div>
<div class="a" style="left:736px;top:534px;width:30px;height:20px;background:#cccccc;border:1px solid #0a4a7a"></div>
<div class="a" style="left:774px;top:534px;width:30px;height:20px;background:#fff;border:1px solid #adadad"></div>
<div class="a" style="left:813px;top:534px;width:30px;height:20px;background:#fff;border:1px solid #adadad"></div>
<div class="lb" style="left:736px;top:537.5px;width:30px;text-align:center;font-size:12px;letter-spacing:0;color:#222">H</div>
<div class="lb" style="left:774px;top:537.5px;width:30px;text-align:center;font-size:12px;letter-spacing:0;color:#222">Z</div>
<div class="lb" style="left:813px;top:537.5px;width:30px;text-align:center;font-size:12px;letter-spacing:0;color:#222">E</div>
<div class="a" style="left:736px;top:558px;width:107px;height:107px;background:#fff;"></div>
<div class="a" style="left:736px;top:558px;width:106px;height:106px;background:#a0a0a0;"></div>
<div class="a" style="left:737px;top:559px;width:105px;height:105px;background:#e3e3e3;"></div>
<div class="a" style="left:737px;top:559px;width:104px;height:104px;background:#696969;"></div>
<div class="a" style="left:738px;top:560px;width:103px;height:103px;background:#828282;"></div>
<svg class="a" style="left:738px;top:560px" width="103" height="103" viewBox="0 0 103 103"><defs><linearGradient id="cg" x1="0" y1="0" x2="0" y2="1"><stop offset="0" stop-color="#f6f8f8"/><stop offset="0.3" stop-color="#fefefe"/><stop offset="1" stop-color="#ffffff"/></linearGradient></defs><path d="M16.1 22 H86.9 L92 28.4 H11 Z" fill="#eef0f0"/><path d="M11 28.4 H92 L90.1 83.6 H12.9 Z" fill="url(#cg)"/><path d="M17 29 H46 M56.5 29 H86.4" stroke="#d3dbdb" stroke-width="1.2"/><path d="M51.2 29 L51.4 81" stroke="#e9e9e9" stroke-width="1"/></svg>
<div class="a" style="left:736px;top:668px;width:107px;height:107px;background:#fff;"></div>
<div class="a" style="left:736px;top:668px;width:106px;height:106px;background:#a0a0a0;"></div>
<div class="a" style="left:737px;top:669px;width:105px;height:105px;background:#e3e3e3;"></div>
<div class="a" style="left:737px;top:669px;width:104px;height:104px;background:#696969;"></div>
<div class="a" style="left:738px;top:670px;width:103px;height:103px;background:#fff;"></div>
<svg class="a" style="left:738px;top:670px" width="103" height="103"><rect x="11.5" y="28.5" width="81" height="46" fill="none" stroke="#000" stroke-width="1" stroke-dasharray="4 4"/></svg>
<div class="a" style="left:736px;top:778px;width:107px;height:107px;background:#fff;"></div>
<div class="a" style="left:736px;top:778px;width:106px;height:106px;background:#a0a0a0;"></div>
<div class="a" style="left:737px;top:779px;width:105px;height:105px;background:#e3e3e3;"></div>
<div class="a" style="left:737px;top:779px;width:104px;height:104px;background:#696969;"></div>
<div class="a" style="left:738px;top:780px;width:103px;height:103px;background:#fff;"></div>
<svg class="a" style="left:738px;top:780px" width="103" height="103"><rect x="11.5" y="22.5" width="81" height="58" fill="none" stroke="#000" stroke-width="1.4"/><path d="M51.5 22 V81" stroke="#000" stroke-width="1.4"/><path d="M12 23.2 H48 M55 23.2 H92 M92 23 V80" stroke="#000" stroke-width="1.8"/></svg>
<div class="a" style="left:846px;top:292px;width:339px;height:594px;background:#f0f0f0;border:1px solid #acacac"></div>
<div class="a" style="left:847px;top:293px;width:337px;height:1px;background:#fff;"></div>
<div class="a" style="left:847px;top:293px;width:1px;height:590px;background:#fff;"></div>
<div class="a" style="left:846px;top:267px;width:32px;height:26px;background:#fff;border:1px solid #acacac;border-bottom:none"></div>
<svg class="a" style="left:846px;top:265px" width="230" height="28" viewBox="846 265 230 28"><g fill="none" stroke="#2a5f8c" stroke-width="1.7" stroke-linejoin="round"><rect x="851" y="274.6" width="15" height="14.4" rx="1"/><path d="M851 274.6 L854.5 271.3 H869 V285.5 L866 289 M866 274.6 L869 271.3"/></g><rect x="883.6" y="269.8" width="18.6" height="18.6" fill="none" stroke="#064176" stroke-width="1.3"/><path d="M887 278.6 L891.4 283 L899.3 274.6" fill="none" stroke="#064176" stroke-width="3"/><ellipse cx="922.5" cy="271.9" rx="6.5" ry="3.05" fill="#064176"/><ellipse cx="922.4" cy="272.3" rx="2.6" ry="1.15" fill="#eef1f5"/><path d="M916 272.9 Q917.5 275.7 922.5 275.7 Q926.5 275.7 928.4 274.9 L929.6 273.8 L929.4 275.9 H935 V288.8 H921 Q916 288.6 916 286 Z" fill="#064176"/><path d="M916.8 274 Q918.6 275.5 922.5 275.4 Q926 275.4 928 274.6" fill="none" stroke="#aebfd0" stroke-width="0.6"/><path d="M921 278 H935" stroke="#6a8db0" stroke-width="1.8"/><path d="M925.5 279 v1.6 M931.4 279 v1.6" stroke="#5f83a8" stroke-width="0.8"/><path d="M924.2 283.6 h3.4 m2.6 0 h1.8" stroke="#9fb5cb" stroke-width="2.2"/><path d="M962.3 272.1 A9 9 0 1 0 966.6 281.9 Q965.6 280.5 964.2 280.9 Q962.4 280.7 962.8 278.4 Q963 276.6 964.2 275.6 Z" fill="#064176"/><g fill="#f1f3f6"><circle cx="957" cy="274.2" r="1.35"/><circle cx="953.2" cy="276.1" r="1.35"/><circle cx="951.8" cy="280" r="1.35"/><circle cx="953.1" cy="283.8" r="1.35"/><circle cx="956.6" cy="285.8" r="1.35"/></g><path d="M968 269.2 L961 277.6" stroke="#064176" stroke-width="1.7"/><path d="M962 276.4 Q958.4 277.6 956.4 281.4 Q960.6 281.2 963 277.6 Z" fill="#064176" stroke="#9db3c9" stroke-width="0.7"/><g stroke="#064176" stroke-width="2"><path d="M984 270.5 H995 M984 274.8 H1001 M984 279.2 H992 M982 283.5 H992 M982 287.8 H998"/></g><ellipse cx="982.8" cy="272.3" rx="2.9" ry="5.2" fill="#f40000"/><circle cx="982.8" cy="281.1" r="1.9" fill="#f40000"/><circle cx="1025" cy="279" r="9.9" fill="#064176"/><rect x="1023.4" y="277" width="3.3" height="8.6" fill="#fff"/><circle cx="1025" cy="273.6" r="1.9" fill="#fff"/><g fill="none" stroke="#064176" stroke-width="1.25"><path d="M1063.4 278 V272.3 H1048.4 V287.4 H1057.5"/><path d="M1048.4 272.3 L1051.4 269.6 H1066 V278 M1063.4 272.3 L1066 269.6"/></g><path d="M1052 280.7 H1067.2 M1059.8 273.4 V289.2" stroke="#064176" stroke-width="3.4"/><path d="M1062.2 288 L1066 284.2 V282.6" fill="none" stroke="#064176" stroke-width="0.9"/></svg>
<div class="a" style="left:849px;top:294px;width:332px;height:30px;background:#fff;border:1px solid #d9d9d9"></div>
<div class="a" style="left:1018px;top:296px;width:158px;height:13px;background:#cccccc;"></div>
<div class="lb" style="left:858.4px;top:297px;font-size:11px;letter-spacing:-0.62px;color:#111;">NEUTRAL KATALOG</div>
<div class="lb" style="left:974px;top:297px;font-size:11px;letter-spacing:-0.07px;color:#111;">09/21</div>
<div class="lb" style="left:1021px;top:297px;font-size:11px;letter-spacing:-0.03px;color:#111;">TRAINING-111-DE</div>
<div class="lb" style="left:1138.8px;top:297px;font-size:11px;letter-spacing:-0.06px;color:#111;">11/21</div>
<div class="lb" style="left:858.4px;top:310px;font-size:11px;letter-spacing:-0.26px;color:#111;">TRAINING-100-DE</div>
<div class="lb" style="left:974px;top:310px;font-size:11px;letter-spacing:-0.01px;color:#111;">06/16</div>
<div class="a" style="left:849px;top:326px;width:332px;height:270px;background:#fff;border:1px solid #d0d0d0"></div>
<div class="lb" style="right:345px;top:333px;font-size:12.5px;letter-spacing:0;transform:scaleX(.85);transform-origin:100% 0;color:#000">450</div>
<div class="lb" style="right:309px;top:333px;font-size:12.5px;letter-spacing:0;transform:scaleX(.85);transform-origin:100% 0;color:#000">600</div>
<div class="a" style="left:852px;top:373px;width:327px;height:44px;background:#c0c0c0;"></div>
<div class="lb" style="right:345px;top:377px;font-size:12.5px;letter-spacing:0;transform:scaleX(.85);transform-origin:100% 0;color:#000">500</div>
<div class="lb" style="right:309px;top:377px;font-size:12.5px;letter-spacing:0;transform:scaleX(.85);transform-origin:100% 0;color:#000">600</div>
<div class="lb" style="right:273px;top:377px;font-size:12.5px;letter-spacing:0;transform:scaleX(.85);transform-origin:100% 0;color:#000">800</div>
<div class="lb" style="right:237px;top:377px;font-size:12.5px;letter-spacing:0;transform:scaleX(.85);transform-origin:100% 0;color:#000">900</div>
<div class="lb" style="right:201px;top:377px;font-size:12.5px;letter-spacing:0;transform:scaleX(.85);transform-origin:100% 0;color:#000">1000</div>
<div class="lb" style="right:165px;top:377px;font-size:12.5px;letter-spacing:0;transform:scaleX(.85);transform-origin:100% 0;color:#000">1200</div>
<div class="lb" style="right:345px;top:421px;font-size:12.5px;letter-spacing:0;transform:scaleX(.85);transform-origin:100% 0;color:#000">400</div>
<div class="lb" style="right:309px;top:421px;font-size:12.5px;letter-spacing:0;transform:scaleX(.85);transform-origin:100% 0;color:#000">450</div>
<div class="lb" style="right:273px;top:421px;font-size:12.5px;letter-spacing:0;transform:scaleX(.85);transform-origin:100% 0;color:#000">500</div>
<div class="lb" style="right:237px;top:421px;font-size:12.5px;letter-spacing:0;transform:scaleX(.85);transform-origin:100% 0;color:#000">600</div>
<div class="lb" style="right:201px;top:421px;font-size:12.5px;letter-spacing:0;transform:scaleX(.85);transform-origin:100% 0;color:#000">800</div>
<div class="lb" style="right:165px;top:421px;font-size:12.5px;letter-spacing:0;transform:scaleX(.85);transform-origin:100% 0;color:#000">900</div>
<div class="lb" style="right:129px;top:421px;font-size:12.5px;letter-spacing:0;transform:scaleX(.85);transform-origin:100% 0;color:#000">1000</div>
<div class="lb" style="right:89px;top:421px;font-size:12.5px;letter-spacing:0;transform:scaleX(.85);transform-origin:100% 0;color:#000">1200</div>
<div class="lb" style="right:345px;top:443px;font-size:12.5px;letter-spacing:0;transform:scaleX(.85);transform-origin:100% 0;color:#000">900</div>
<div class="lb" style="right:309px;top:443px;font-size:12.5px;letter-spacing:0;transform:scaleX(.85);transform-origin:100% 0;color:#000">1100</div>
<div class="lb" style="right:273px;top:443px;font-size:12.5px;letter-spacing:0;transform:scaleX(.85);transform-origin:100% 0;color:#000">1200</div>
<div class="lb" style="right:237px;top:443px;font-size:12.5px;letter-spacing:0;transform:scaleX(.85);transform-origin:100% 0;color:#000">1300</div>
<div class="a" style="left:852px;top:461px;width:327px;height:44px;background:#c0c0c0;"></div>
<div class="lb" style="right:345px;top:465px;font-size:12.5px;letter-spacing:0;transform:scaleX(.85);transform-origin:100% 0;color:#000">150</div>
<div class="lb" style="right:309px;top:465px;font-size:12.5px;letter-spacing:0;transform:scaleX(.85);transform-origin:100% 0;color:#000">300</div>
<div class="lb" style="right:273px;top:465px;font-size:12.5px;letter-spacing:0;transform:scaleX(.85);transform-origin:100% 0;color:#000">400</div>
<div class="lb" style="right:237px;top:465px;font-size:12.5px;letter-spacing:0;transform:scaleX(.85);transform-origin:100% 0;color:#000">450</div>
<div class="lb" style="right:201px;top:465px;font-size:12.5px;letter-spacing:0;transform:scaleX(.85);transform-origin:100% 0;color:#000">500</div>
<div class="lb" style="right:165px;top:465px;font-size:12.5px;letter-spacing:0;transform:scaleX(.85);transform-origin:100% 0;color:#000">600</div>
<div class="lb" style="right:129px;top:465px;font-size:12.5px;letter-spacing:0;transform:scaleX(.85);transform-origin:100% 0;color:#000">800</div>
<div class="lb" style="right:89px;top:465px;font-size:12.5px;letter-spacing:0;transform:scaleX(.85);transform-origin:100% 0;color:#000">&gt;800</div>
<div class="lb" style="right:345px;top:487px;font-size:12.5px;letter-spacing:0;transform:scaleX(.85);transform-origin:100% 0;color:#000">600</div>
<div class="lb" style="right:309px;top:487px;font-size:12.5px;letter-spacing:0;transform:scaleX(.85);transform-origin:100% 0;color:#000">800</div>
<div class="lb" style="right:273px;top:487px;font-size:12.5px;letter-spacing:0;transform:scaleX(.85);transform-origin:100% 0;color:#000">900</div>
<div class="lb" style="right:237px;top:487px;font-size:12.5px;letter-spacing:0;transform:scaleX(.85);transform-origin:100% 0;color:#000">1000</div>
<div class="lb" style="right:201px;top:487px;font-size:12.5px;letter-spacing:0;transform:scaleX(.85);transform-origin:100% 0;color:#000">1100</div>
<div class="lb" style="right:165px;top:487px;font-size:12.5px;letter-spacing:0;transform:scaleX(.85);transform-origin:100% 0;color:#000">1200</div>
<div class="lb" style="right:129px;top:487px;font-size:12.5px;letter-spacing:0;transform:scaleX(.85);transform-origin:100% 0;color:#000">1300</div>
<div class="lb" style="right:345px;top:509px;font-size:12.5px;letter-spacing:0;transform:scaleX(.85);transform-origin:100% 0;color:#000">150</div>
<div class="lb" style="right:309px;top:509px;font-size:12.5px;letter-spacing:0;transform:scaleX(.85);transform-origin:100% 0;color:#000">300</div>
<div class="lb" style="right:273px;top:509px;font-size:12.5px;letter-spacing:0;transform:scaleX(.85);transform-origin:100% 0;color:#000">400</div>
<div class="lb" style="right:237px;top:509px;font-size:12.5px;letter-spacing:0;transform:scaleX(.85);transform-origin:100% 0;color:#000">450</div>
<div class="lb" style="right:201px;top:509px;font-size:12.5px;letter-spacing:0;transform:scaleX(.85);transform-origin:100% 0;color:#000">500</div>
<div class="lb" style="right:165px;top:509px;font-size:12.5px;letter-spacing:0;transform:scaleX(.85);transform-origin:100% 0;color:#000">600</div>
<div class="lb" style="right:129px;top:509px;font-size:12.5px;letter-spacing:0;transform:scaleX(.85);transform-origin:100% 0;color:#000">800</div>
<div class="lb" style="right:89px;top:509px;font-size:12.5px;letter-spacing:0;transform:scaleX(.85);transform-origin:100% 0;color:#000">&gt;800</div>
<div class="lb" style="right:345px;top:531px;font-size:12.5px;letter-spacing:0;transform:scaleX(.85);transform-origin:100% 0;color:#000">600</div>
<div class="lb" style="right:309px;top:531px;font-size:12.5px;letter-spacing:0;transform:scaleX(.85);transform-origin:100% 0;color:#000">800</div>
<div class="a" style="left:852px;top:549px;width:327px;height:44px;background:#c0c0c0;"></div>
<div class="lb" style="right:345px;top:553px;font-size:12.5px;letter-spacing:0;transform:scaleX(.85);transform-origin:100% 0;color:#000">150</div>
<div class="lb" style="right:309px;top:553px;font-size:12.5px;letter-spacing:0;transform:scaleX(.85);transform-origin:100% 0;color:#000">300</div>
<div class="lb" style="right:273px;top:553px;font-size:12.5px;letter-spacing:0;transform:scaleX(.85);transform-origin:100% 0;color:#000">600</div>
<div class="lb" style="right:345px;top:575px;font-size:12.5px;letter-spacing:0;transform:scaleX(.85);transform-origin:100% 0;color:#000">600</div>
<div class="lb" style="right:309px;top:575px;font-size:12.5px;letter-spacing:0;transform:scaleX(.85);transform-origin:100% 0;color:#000">800</div>
<svg class="a" style="left:850px;top:327px" width="46" height="268" viewBox="850 327 46 268"><g stroke="#000" fill="none"><path d="M853 345 H891" stroke-width="2"/><g stroke-width="1.1"><path d="M865.5 329.4 V343 M859.6 332.8 L871.4 339.6 M859.6 339.6 L871.4 332.8"/><path d="M863.6 330.6 L865.5 332.3 L867.4 330.6 M863.6 341.8 L865.5 340.1 L867.4 341.8 M859.9 335.2 L862.1 334.3 L861.6 331.9 M871.1 337.2 L868.9 338.1 L869.4 340.5 M859.9 337.2 L862.1 338.1 L861.6 340.5 M871.1 335.2 L868.9 334.3 L869.4 331.9"/></g><circle cx="865.5" cy="336.2" r="1.5" fill="#000" stroke="none"/><rect x="878.8" y="329.6" width="11.6" height="2" fill="#d8d8d8" stroke-width="1"/><path d="M878.8 344.5 V335 Q878.8 333.5 880.3 333.5 H888.9 Q890.4 333.5 890.4 335 V344.5" stroke-width="1.1"/><g stroke-width="1.1"><rect x="853.6" y="349.6" width="11.4" height="16.4"/><rect x="866.6" y="349.6" width="11" height="16.4"/><rect x="879.4" y="349.6" width="11" height="16.4"/><path d="M854 350 L859.3 355.6 L864.6 350 M867 350 L872.1 355.6 L877.2 350 M879.8 350 L884.9 355.6 L890 350"/></g><path d="M853 366 H891" stroke-width="2"/></g><g stroke="#000" fill="#fff" stroke-width="1.2"><path d="M873.8 375.6 Q871.2 374.2 871.4 376.8 M886.2 375.6 Q888.8 374.2 888.6 376.8" fill="none"/><rect x="874.6" y="373.8" width="11" height="6"/><rect x="853.6" y="380.8" width="37" height="29.6"/><path d="M853.6 388.3 H890.6" /><rect x="860.3" y="383.2" width="3.4" height="2.4" stroke-width="1"/><rect x="866.6" y="382.7" width="11" height="3" stroke-width="1"/><rect x="880.3" y="383.2" width="7.4" height="2.4" stroke-width="1"/><rect x="858.6" y="388.6" width="27" height="17"/><path d="M858.6 392 H885.6" stroke-width="1.8"/><path d="M853.6 408 H890.6" stroke-width="1.9"/></g><g stroke="#141414" fill="none" stroke-width="1.5" stroke-linejoin="round" stroke-linecap="round"><path d="M853.9 438.3 V449.8 H883.9 V439 H890.2"/><g stroke-width="1.1"><path d="M890.2 439 V423.4 L886.6 422.2 M886.6 439 V432.6 L866.6 425.2 Q865 424.8 864 426.2 L862.6 427.8 M886.6 427.6 V422.4 M886.6 427.6 L865.4 421.4 Q863.6 421 862.6 422.6 L860.6 426.2"/><path d="M877.4 420.4 L886.6 422.8 L890 423.6" stroke-width="1.7"/></g><path d="M859 428.2 L863.4 429.8" stroke-width="2"/></g><g stroke="#000" fill="#fff" stroke-width="1.1"><path d="M866.8 463.6 H869.4 V466 H866.8" fill="#aaa"/><rect x="858.6" y="462.6" width="8.2" height="6.6"/><path d="M853.4 469.8 H871.2 L868.6 472 H856 Z"/><path d="M853.8 472.6 H870.8 L868.2 474.8 H856.4 Z"/><path d="M854.4 475.2 H870.2 L866.6 477.4 H858 Z"/><path d="M855.6 480.6 H869.4 V497.4 L868.4 498.4 H856.6 L855.6 497.4 Z"/><path d="M856.4 481 L862.5 486.8 L868.6 481" fill="none"/><path d="M874.4 465.4 V462.6 H888.8 V465.4" /><path d="M875.4 465 Q877 463.2 878.6 464.4 Q881.6 465.6 884.6 464.4 Q886.4 463.2 887.8 465" fill="none" stroke-width="0.9"/><path d="M872.6 465.8 H890.4 V497.4 L889.4 498.4 H873.6 L872.6 497.4 Z"/><path d="M883.6 468 Q879.2 472.6 879.2 478.4 L879.6 483.4 H883.6 Z" stroke-width="0.9"/><path d="M880.4 483.6 V495.4 Q882 497.2 883.6 495.4 V483.6" stroke-width="0.9"/><path d="M883.6 468 V496" stroke-width="1.1"/></g><g stroke="#000" fill="#fff" stroke-width="1.2" stroke-linejoin="round"><path d="M861.6 505.6 H881.2 L888.6 513.4 H854.6 Z"/><rect x="854.6" y="513.4" width="34" height="29"/><path d="M854.6 515.4 H888.6 M854.6 527.2 H888.6 M854.6 529.2 H888.6 M854.6 540.2 H888.6" fill="none"/><path d="M862.6 515.4 V518.6 H880.6 V515.4 M862.6 518.6 L855 527 M880.6 518.6 L888.2 527 M862.6 529.2 V532.4 H880.6 V529.2 M862.6 532.4 L855 540 M880.6 532.4 L888.2 540" fill="none"/></g><rect x="862" y="549" width="14.5" height="38" fill="#fff"/><rect x="876.4" y="549" width="4.7" height="38" fill="#000"/><path d="M876.4 549.5 H862.5 V586.5 H876.4" fill="none" stroke="#000" stroke-width="1" stroke-dasharray="3.5 3"/></svg>
<div class="lb" style="left:849px;top:601px;font-size:12.5px;letter-spacing:0;transform:scaleX(0.8158);transform-origin:0 0;color:#222;">Artikelliste:</div>
<div class="a" style="left:965px;top:598px;width:23px;height:18px;background:#fff;border:1px solid #adadad"></div>
<svg class="a" style="left:965px;top:598px" width="23" height="18" viewBox="965 598 23 18"><circle cx="977.8" cy="605.5" r="5.1" fill="none" stroke="#0c477a" stroke-width="1.35"/><path d="M973.6 610.3 L970.1 614" stroke="#0c477a" stroke-width="2.7"/></svg>
<div class="a" style="left:991px;top:602px;width:11px;height:11px;background:#fff;border:1px solid #8c8c8c"></div>
<svg class="a" style="left:991px;top:602px" width="11" height="11" viewBox="0 0 11 11"><path d="M2.4 5.6 L4.5 7.8 L8.7 2.9" fill="none" stroke="#6a6a6a" stroke-width="1.5"/></svg>
<div class="lb" style="left:1005px;top:601px;font-size:12.5px;letter-spacing:0;transform:scaleX(0.8372);transform-origin:0 0;color:#e00000;">Artikelsuche</div>
<div class="a" style="left:1106px;top:602px;width:11px;height:11px;background:#fff;border:1px solid #8c8c8c"></div>
<div class="lb" style="left:1119.7px;top:601px;font-size:12.5px;letter-spacing:0;transform:scaleX(0.8521);transform-origin:0 0;color:#111;">QuickClick</div>
<div class="a" style="left:849px;top:618px;width:332px;height:132px;background:#fff;border:1px solid #d0d0d0"></div>
<div class="a" style="left:854px;top:646px;width:305px;height:13px;background:#c6c6c6;"></div>
<div class="a" style="left:850px;top:619px;width:311px;height:130px;overflow:hidden">
<div class="lb" style="left:8.2px;top:1.5px;font-size:11px;letter-spacing:-0.47px;color:#2a2a2a">NSPU100-X</div>
<div class="lb" style="left:188.3px;top:1.5px;font-size:11px;letter-spacing:-0.02px;color:#2a2a2a">XL-Spülenschrank 1</div>
<div class="lb" style="left:8.2px;top:14.5px;font-size:11px;letter-spacing:-0.47px;color:#2a2a2a">SPUD100-X</div>
<div class="lb" style="left:188.3px;top:14.5px;font-size:11px;letter-spacing:-0.02px;color:#2a2a2a">XL-Spülenschrank 1</div>
<div class="lb" style="left:8.2px;top:27.5px;font-size:11px;letter-spacing:-0.46px;color:#2a2a2a">SPUD100</div>
<div class="lb" style="left:188.3px;top:27.5px;font-size:11px;letter-spacing:0.18px;color:#2a2a2a">Spülenschrank 2 Inn...</div>
<div class="lb" style="left:8.2px;top:40.5px;font-size:11px;letter-spacing:-0.29px;color:#2a2a2a">SPUD100-M</div>
<div class="lb" style="left:188.3px;top:40.5px;font-size:11px;letter-spacing:0.2px;color:#2a2a2a">Maxi-Spülenschrank 2</div>
<div class="lb" style="left:8.2px;top:53.5px;font-size:11px;letter-spacing:-0.48px;color:#2a2a2a">NSPU2A-ASS100-X</div>
<div class="lb" style="left:188.3px;top:53.5px;font-size:11px;letter-spacing:-0.03px;color:#2a2a2a">XL-Spülen-Auszugsc...</div>
<div class="lb" style="left:8.2px;top:66.5px;font-size:11px;letter-spacing:-0.57px;color:#2a2a2a">NSPU2AK-ASS100X</div>
<div class="lb" style="left:188.3px;top:66.5px;font-size:11px;letter-spacing:-0.03px;color:#2a2a2a">XL-Spülen-Auszugsc...</div>
<div class="lb" style="left:8.2px;top:79.5px;font-size:11px;letter-spacing:-0.45px;color:#2a2a2a">NSPUASA100-X</div>
<div class="lb" style="left:188.3px;top:79.5px;font-size:11px;letter-spacing:-0.03px;color:#2a2a2a">XL-Spülen-Auszugsc...</div>
<div class="lb" style="left:8.2px;top:92.5px;font-size:11px;letter-spacing:-0.45px;color:#2a2a2a">22231</div>
<div class="lb" style="left:188.3px;top:92.5px;font-size:11px;letter-spacing:0.11px;color:#2a2a2a">Spülen-Auszugschra...</div>
<div class="lb" style="left:8.2px;top:105.5px;font-size:11px;letter-spacing:-0.45px;color:#2a2a2a">NSPU2AK-AS100</div>
<div class="lb" style="left:188.3px;top:105.5px;font-size:11px;letter-spacing:0.11px;color:#2a2a2a">Spülen-Auszugschra...</div>
<div class="lb" style="left:8.2px;top:118.5px;font-size:11px;letter-spacing:-0.45px;color:#2a2a2a">NSPUASA100</div>
<div class="lb" style="left:188.3px;top:118.5px;font-size:11px;letter-spacing:0.11px;color:#2a2a2a">Spülen-Auszugschra...</div>
</div>
<div class="a" style="left:1162px;top:620px;width:17px;height:127px;background:#e8e8e8;"></div>
<div class="a" style="left:1162px;top:620px;width:17px;height:17px;background:#fff;border:1px solid #c8c8c8"></div>
<div class="a" style="left:1162px;top:730px;width:17px;height:17px;background:#fff;border:1px solid #c8c8c8"></div>
<div class="a" style="left:1162px;top:637px;width:17px;height:70px;background:#fff;border:1px solid #c8c8c8;border-top:none"></div>
<svg class="a" style="left:1162px;top:620px" width="17" height="129"><path d="M4.5 11 L8.5 6.5 L12.5 11 Z" fill="#606060"/><path d="M4.5 116.5 L8.5 121 L12.5 116.5 Z" fill="#606060"/></svg>
<div class="lb" style="left:849px;top:758.5px;font-size:12.5px;letter-spacing:0;transform:scaleX(0.8500);transform-origin:0 0;color:#222;">Menge</div>
<div class="a" style="left:894px;top:754px;width:16px;height:16px;background:#fff;border:1px solid #adadad"></div>
<svg class="a" style="left:894px;top:754px" width="16" height="16"><path d="M5.5 3.5 L10.5 8 L5.5 12.5 Z" fill="#000"/></svg>
<div class="lb" style="left:914.5px;top:758.5px;font-size:12.5px;letter-spacing:0;transform:scaleX(0.7996);transform-origin:0 0;color:#222;">Artikelnummer:</div>
<div class="a" style="left:849px;top:771px;width:42px;height:20px;background:#f0f0f0;border:1px solid #adadad;box-shadow:inset 0 0 0 1px #fbfbfb"></div>
<div class="lb" style="right:377.5px;top:774px;font-size:12.5px;letter-spacing:0;transform:scaleX(.85);transform-origin:100% 0;color:#666">1.00</div>
<div class="a" style="left:894px;top:771px;width:179px;height:20px;background:#fff;border:1px solid #adadad;box-shadow:inset 0 0 0 1px #fff"></div>
<div class="lb" style="left:897px;top:775px;font-size:12px;letter-spacing:-0.79px;color:#222">SPUD100</div>
<div class="lb" style="left:849px;top:792.5px;font-size:12.5px;letter-spacing:0;transform:scaleX(0.8500);transform-origin:0 0;color:#222;">Breite</div>
<div class="lb" style="left:894px;top:792.5px;font-size:12.5px;letter-spacing:0;transform:scaleX(0.8500);transform-origin:0 0;color:#222;">Tiefe</div>
<div class="lb" style="left:939px;top:792.5px;font-size:12.5px;letter-spacing:0;transform:scaleX(0.8500);transform-origin:0 0;color:#222;">Höhe</div>
<div class="lb" style="left:993.7px;top:792.5px;font-size:12.5px;letter-spacing:0;transform:scaleX(0.8500);transform-origin:0 0;color:#222;">Preis</div>
<div class="a" style="left:849px;top:805px;width:42px;height:20px;background:#f0f0f0;border:1px solid #adadad;box-shadow:inset 0 0 0 1px #fbfbfb"></div>
<div class="lb" style="right:377.5px;top:808px;font-size:12.5px;letter-spacing:0;transform:scaleX(.85);transform-origin:100% 0;color:#666">1000</div>
<div class="a" style="left:894px;top:805px;width:42px;height:20px;background:#f0f0f0;border:1px solid #adadad;box-shadow:inset 0 0 0 1px #fbfbfb"></div>
<div class="lb" style="right:332.5px;top:808px;font-size:12.5px;letter-spacing:0;transform:scaleX(.85);transform-origin:100% 0;color:#666">561</div>
<div class="a" style="left:939px;top:805px;width:42px;height:20px;background:#f0f0f0;border:1px solid #adadad;box-shadow:inset 0 0 0 1px #fbfbfb"></div>
<div class="lb" style="right:287.5px;top:808px;font-size:12.5px;letter-spacing:0;transform:scaleX(.85);transform-origin:100% 0;color:#666">720</div>
<div class="a" style="left:993px;top:805px;width:80px;height:20px;background:#f0f0f0;border:1px solid #adadad;box-shadow:inset 0 0 0 1px #fbfbfb"></div>
<div class="lb" style="right:195.5px;top:808px;font-size:12.5px;letter-spacing:0;transform:scaleX(.85);transform-origin:100% 0;color:#333">788.00</div>
<div class="lb" style="left:849px;top:826.5px;font-size:12.5px;letter-spacing:0;transform:scaleX(0.8500);transform-origin:0 0;color:#222;">Seite</div>
<div class="lb" style="left:894px;top:826.5px;font-size:12.5px;letter-spacing:0;transform:scaleX(0.8500);transform-origin:0 0;color:#222;">EDV-Nr.</div>
<div class="a" style="left:849px;top:839px;width:42px;height:20px;background:#f0f0f0;border:1px solid #adadad;box-shadow:inset 0 0 0 1px #fbfbfb"></div>
<div class="lb" style="right:377.5px;top:842px;font-size:12.5px;letter-spacing:0;transform:scaleX(.85);transform-origin:100% 0;color:#666">M 3.24</div>
<div class="a" style="left:894px;top:839px;width:179px;height:20px;background:#f0f0f0;border:1px solid #adadad;box-shadow:inset 0 0 0 1px #fbfbfb"></div>
<div class="lb" style="left:897px;top:842px;font-size:12.5px;letter-spacing:0;transform:scaleX(.85);transform-origin:0 0;color:#666">31160</div>
<div class="a" style="left:849px;top:862px;width:224px;height:22px;background:#fff;border:1px solid #c4c4c4;border-bottom:none"></div>
<div class="lb" style="left:853.7px;top:867px;font-size:12px;letter-spacing:-0.79px;color:#222;">Kopfdaten 1</div>
<svg class="a" style="left:1059px;top:870px" width="8" height="6"><path d="M1 1 L3.6 4.2 L6.2 1 Z" fill="#606060"/></svg>
<div class="a" style="left:1084px;top:836px;width:11px;height:11px;background:#f7f7f7;border:1px solid #c4c4c4"></div>
<div class="lb" style="left:1098.4px;top:835.5px;font-size:12.5px;letter-spacing:0;transform:scaleX(0.8187);transform-origin:0 0;color:#a3a3a3;">Unterposition</div>
<div class="a" style="left:1084px;top:853px;width:11px;height:11px;background:#f7f7f7;border:1px solid #c4c4c4"></div>
<svg class="a" style="left:1084px;top:853px" width="11" height="11" viewBox="0 0 11 11"><path d="M2.4 5.6 L4.5 7.8 L8.7 2.9" fill="none" stroke="#b4b4b4" stroke-width="1.5"/></svg>
<div class="lb" style="left:1097.4px;top:852px;font-size:12.5px;letter-spacing:0;transform:scaleX(0.8363);transform-origin:0 0;color:#a3a3a3;">kaufmännisch</div>
<div class="a" style="left:1080px;top:865px;width:104px;height:19px;overflow:hidden">
<div class="a" style="left:4px;top:3px;width:11px;height:11px;background:#f7f7f7;border:1px solid #c4c4c4"></div><svg class="a" style="left:4px;top:3px" width="11" height="11" viewBox="0 0 11 11"><path d="M2.4 5.6 L4.5 7.8 L8.7 2.9" fill="none" stroke="#b0b0b0" stroke-width="1.5"/></svg>
<div class="lb" style="left:17.4px;top:2.5px;font-size:12.5px;letter-spacing:0;transform:scaleX(.85);transform-origin:0 0;color:#a3a3a3">grafisch</div></div>
<div class="a" style="left:1016px;top:889px;width:83px;height:23px;background:#cccccc;border:1px solid #0a4a7a"></div>
<div class="lb" style="left:1037.5px;top:894px;font-size:12.5px;letter-spacing:0;transform:scaleX(0.8109);transform-origin:0 0;color:#222;">Ersetzen</div>
<div class="a" style="left:1102px;top:889px;width:83px;height:23px;background:#fff;border:1px solid #adadad"></div>
<div class="lb" style="left:1117.5px;top:894px;font-size:12.5px;letter-spacing:0;transform:scaleX(0.8435);transform-origin:0 0;color:#222;">Abbrechen</div>
<svg class="a" style="left:1062px;top:905px" width="14" height="22" viewBox="0 0 14 22"><path d="M1 1 V17.2 L4.8 13.6 L7.6 20 L10 19 L7.2 12.8 H12.4 Z" fill="#fff" stroke="#000" stroke-width="1"/></svg>
<svg class="a" style="left:1004px;top:874px" width="110" height="52"><rect x="5.2" y="4.6" width="98.2" height="40.8" rx="1" fill="none" stroke="#d0da3c" stroke-width="3.1"/></svg>
</body></html>
